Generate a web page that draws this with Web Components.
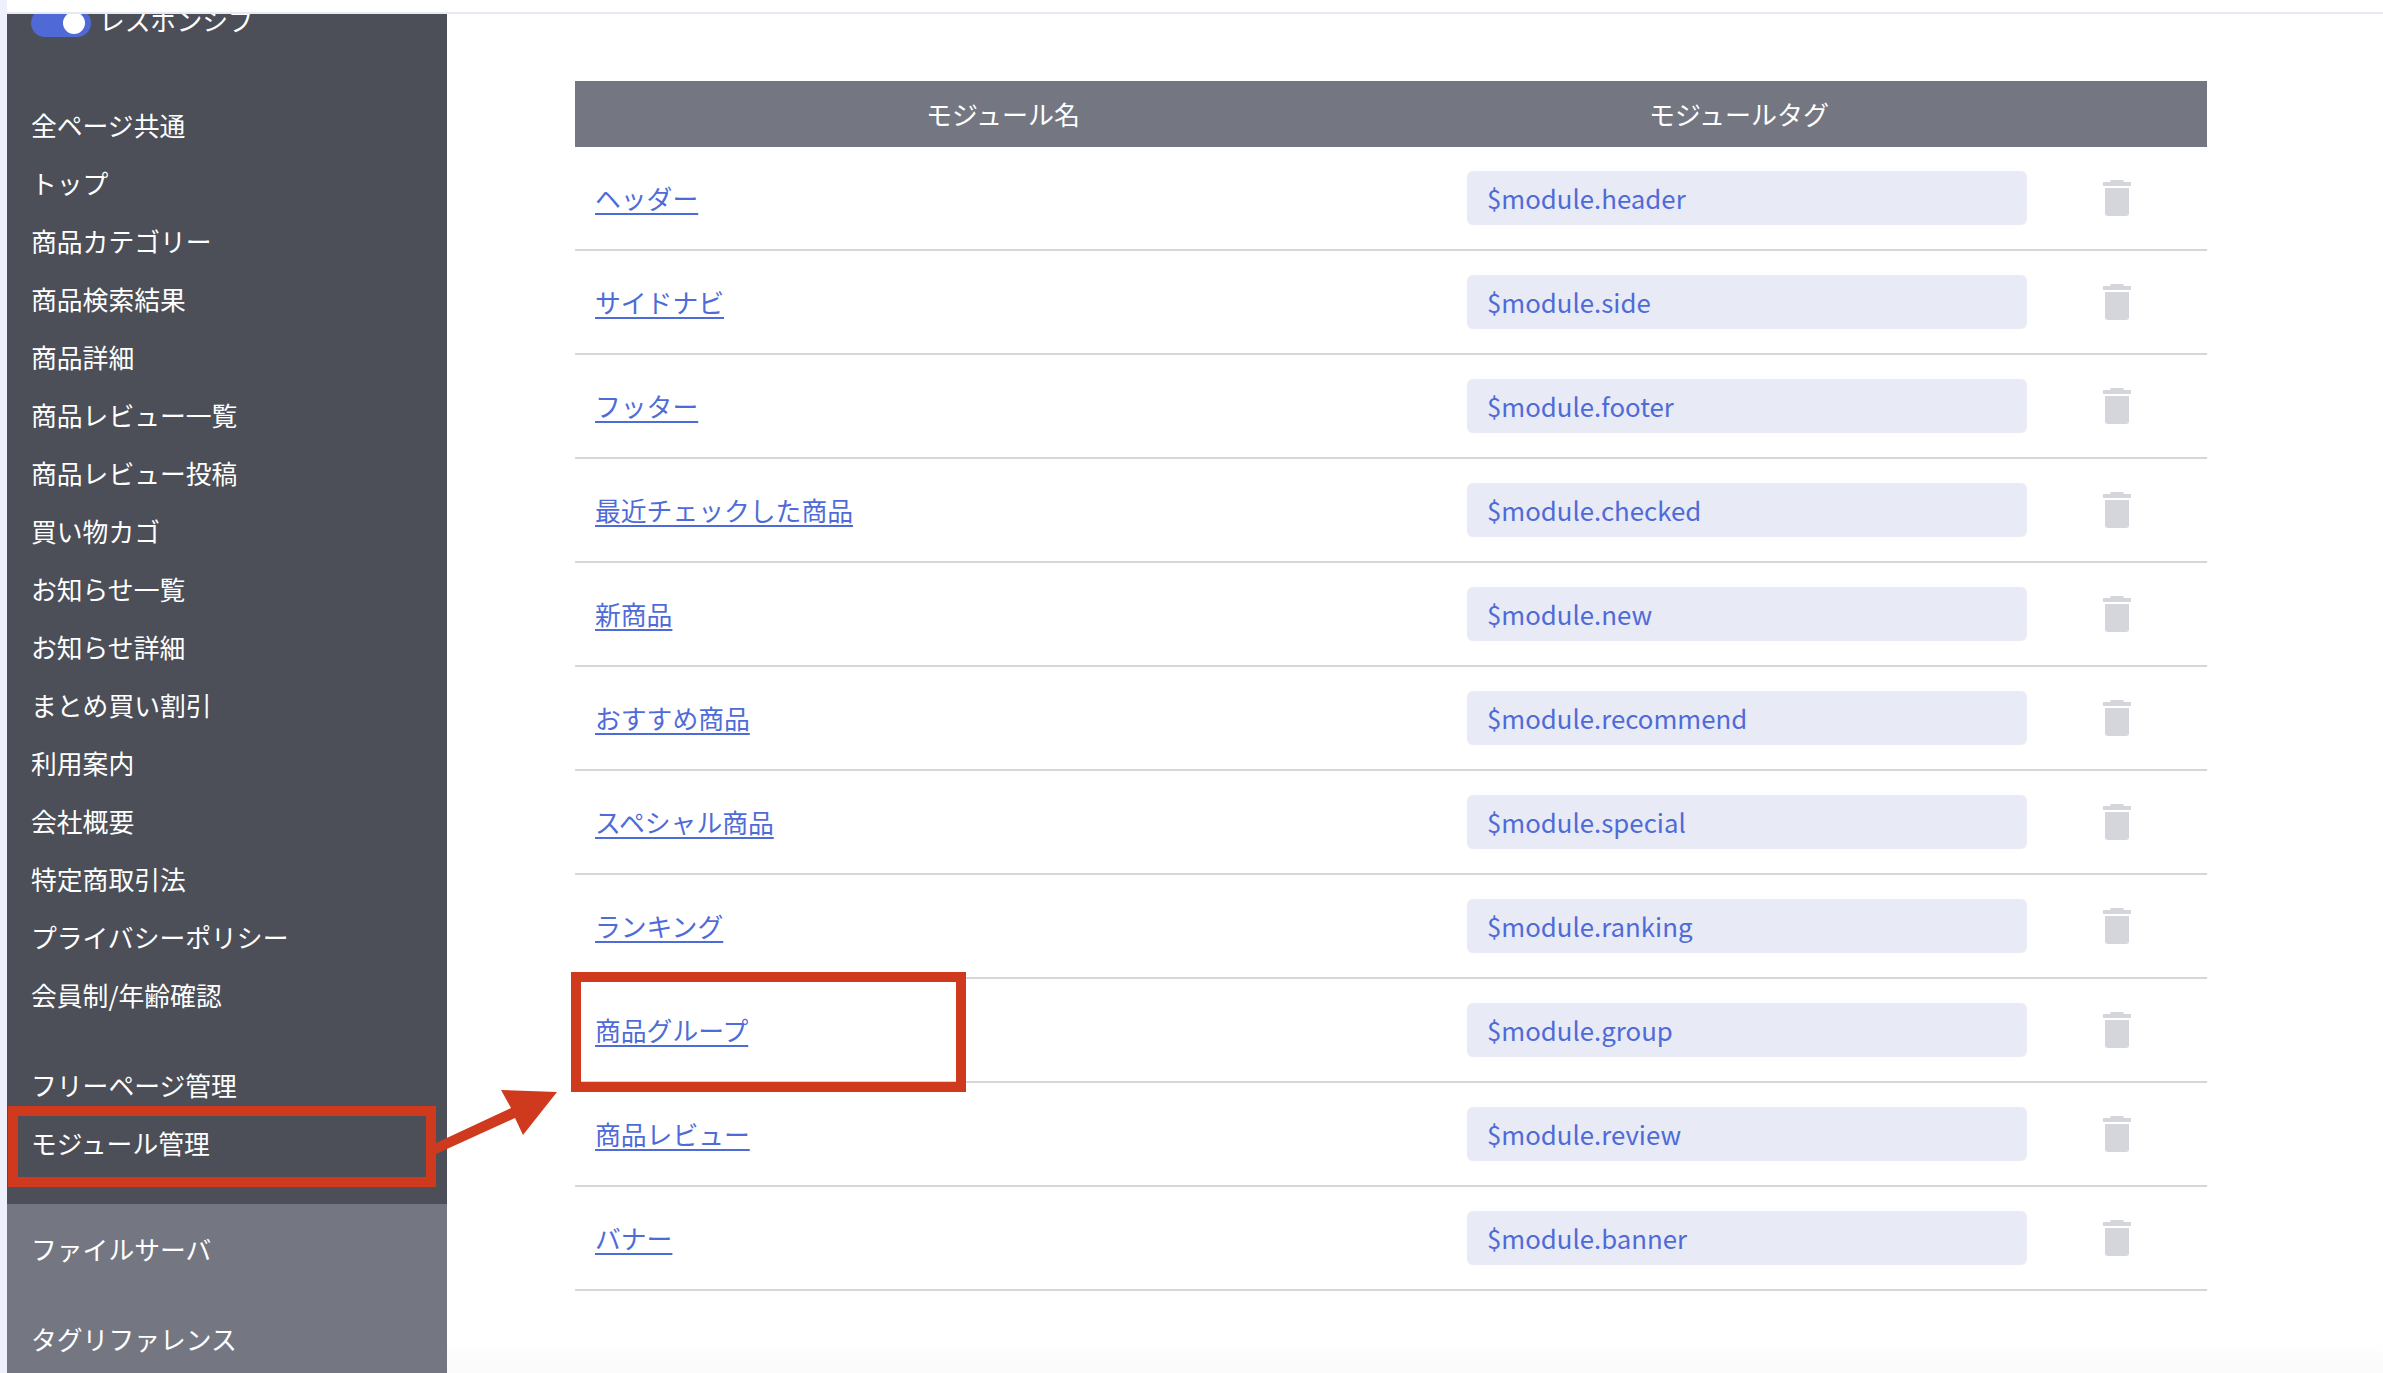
<!DOCTYPE html>
<html lang="ja">
<head>
<meta charset="utf-8">
<title>モジュール管理</title>
<style>
    html, body { margin: 0; height: 100%; overflow: hidden; background: #fff; }
    body { font-family: "Noto Sans CJK JP", "Noto Sans", sans-serif; }
</style>
</head>
<body>
<admin-page>
    <side-nav slot="side">
        <nav-toggle>レスポンシブ</nav-toggle>
        <nav-group>
            <nav-item>全ページ共通</nav-item>
            <nav-item>トップ</nav-item>
            <nav-item>商品カテゴリー</nav-item>
            <nav-item>商品検索結果</nav-item>
            <nav-item>商品詳細</nav-item>
            <nav-item>商品レビュー一覧</nav-item>
            <nav-item>商品レビュー投稿</nav-item>
            <nav-item>買い物カゴ</nav-item>
            <nav-item>お知らせ一覧</nav-item>
            <nav-item>お知らせ詳細</nav-item>
            <nav-item>まとめ買い割引</nav-item>
            <nav-item>利用案内</nav-item>
            <nav-item>会社概要</nav-item>
            <nav-item>特定商取引法</nav-item>
            <nav-item>プライバシーポリシー</nav-item>
            <nav-item>会員制/年齢確認</nav-item>
        </nav-group>
        <nav-group>
            <nav-item>フリーページ管理</nav-item>
            <nav-item>モジュール管理</nav-item>
        </nav-group>
        <nav-tools slot="tools">
            <nav-item>ファイルサーバ</nav-item>
            <nav-item>タグリファレンス</nav-item>
        </nav-tools>
    </side-nav>
    <module-table>
        <module-row tag="$module.header">ヘッダー</module-row>
        <module-row tag="$module.side">サイドナビ</module-row>
        <module-row tag="$module.footer">フッター</module-row>
        <module-row tag="$module.checked">最近チェックした商品</module-row>
        <module-row tag="$module.new">新商品</module-row>
        <module-row tag="$module.recommend">おすすめ商品</module-row>
        <module-row tag="$module.special">スペシャル商品</module-row>
        <module-row tag="$module.ranking">ランキング</module-row>
        <module-row tag="$module.group">商品グループ</module-row>
        <module-row tag="$module.review">商品レビュー</module-row>
        <module-row tag="$module.banner">バナー</module-row>
    </module-table>
    <call-out slot="overlay"></call-out>
</admin-page>

<script>
class AdminPage extends HTMLElement {
    constructor(){
        super();
        this.attachShadow({mode:'open'});
        this.shadowRoot.innerHTML = `
            <style>
                :host{
                    display: grid;
                    grid-template-columns: 7px 440px 1fr;
                    grid-template-rows: 14px 1fr;
                    position: relative;
                    height: 1373px;
                    overflow: hidden;
                    background: #fff;
                }
                .strip{
                    grid-row: 1 / 3;
                    background: #eef1fb;
                }
                .top{
                    grid-column: 2 / 4;
                    background: #fff;
                    border-bottom: 2px solid #e8eaf2;
                    box-sizing: border-box;
                }
                main{
                    padding: 67px 176px 0 128px;
                    background: linear-gradient(to bottom, #fff 1325px, #fafafa 1359px);
                }
            </style>
            <div class="strip"></div>
            <div class="top"></div>
            <slot name="side"></slot>
            <main><slot></slot></main>
            <slot name="overlay"></slot>
        `;
    }
}

class SideNav extends HTMLElement {
    constructor(){
        super();
        this.attachShadow({mode:'open'});
        this.shadowRoot.innerHTML = `
            <style>
                :host{
                    display: flex;
                    flex-direction: column;
                    height: 1359px;
                    overflow: hidden;
                    color: #fff;
                    font-size: 25.8px;
                }
                .dark{
                    display: flex;
                    flex-direction: column;
                    gap: 32px;
                    box-sizing: border-box;
                    height: 1190px;
                    padding-left: 24px;
                    background: #4c4f58;
                }
                .light{
                    flex: 1;
                    padding-left: 24px;
                    background: #747781;
                }
            </style>
            <div class="dark"><slot></slot></div>
            <div class="light"><slot name="tools"></slot></div>
        `;
    }
}

class NavToggle extends HTMLElement {
    constructor(){
        super();
        this.attachShadow({mode:'open'});
        this.shadowRoot.innerHTML = `
            <style>
                :host{
                    display: flex;
                    align-items: center;
                    gap: 8px;
                    height: 28px;
                    margin-top: -5px;
                    margin-bottom: 27px;
                    line-height: 28px;
                }
                .track{
                    position: relative;
                    width: 60px;
                    height: 28px;
                    border-radius: 14px;
                    background: #4f69d6;
                }
                .knob{
                    position: absolute;
                    top: 3px;
                    right: 6px;
                    width: 22px;
                    height: 22px;
                    border-radius: 50%;
                    background: #fff;
                }
                span{ position: relative; top: -3px; }
            </style>
            <div class="track"><div class="knob"></div></div>
            <span><slot></slot></span>
        `;
    }
}

class NavGroup extends HTMLElement {
    constructor(){
        super();
        this.attachShadow({mode:'open'});
        this.shadowRoot.innerHTML = `
            <style>
                :host{ display: block; }
            </style>
            <slot></slot>
        `;
    }
}

class NavTools extends HTMLElement {
    constructor(){
        super();
        this.attachShadow({mode:'open'});
        this.shadowRoot.innerHTML = `
            <style>
                :host{
                    display: flex;
                    flex-direction: column;
                    gap: 32px;
                    padding-top: 16px;
                }
            </style>
            <slot></slot>
        `;
    }
}

class NavItem extends HTMLElement {
    constructor(){
        super();
        this.attachShadow({mode:'open'});
        this.shadowRoot.innerHTML = `
            <style>
                :host{
                    display: block;
                    height: 58px;
                    line-height: 58px;
                    white-space: nowrap;
                }
            </style>
            <slot></slot>
        `;
    }
}

class ModuleTable extends HTMLElement {
    constructor(){
        super();
        this.attachShadow({mode:'open'});
        this.shadowRoot.innerHTML = `
            <style>
                :host{
                    display: block;
                    font-size: 25.8px;
                }
                .head{
                    display: grid;
                    grid-template-columns: 856px 616px 1fr;
                    height: 66px;
                    line-height: 66px;
                    font-size: 26px;
                    text-align: center;
                    color: #fff;
                    background: #747781;
                }
            </style>
            <div class="head">
                <div>モジュール名</div>
                <div>モジュールタグ</div>
                <div></div>
            </div>
            <slot></slot>
        `;
    }
}

class ModuleRow extends HTMLElement {
    constructor(){
        super();
        this.attachShadow({mode:'open'});
        this.shadowRoot.innerHTML = `
            <style>
                :host{
                    display: grid;
                    grid-template-columns: 892px 560px 1fr;
                    align-items: center;
                    height: 104px;
                    box-sizing: border-box;
                    border-bottom: 2px solid #d5d6dc;
                }
                a{
                    margin-left: 20px;
                    justify-self: start;
                    position: relative;
                    top: -1px;
                    color: #4f6bd8;
                    text-decoration-thickness: 2px;
                    text-underline-offset: 4px;
                }
                .tag{
                    box-sizing: border-box;
                    height: 54px;
                    line-height: 53px;
                    padding-left: 20px;
                    border-radius: 6px;
                    color: #4f6bd8;
                    background: #e8eaf6;
                }
                svg{
                    display: block;
                    margin-left: 76px;
                }
            </style>
            <a href="#"><slot></slot></a>
            <div class="tag">${this.getAttribute('tag') || ''}</div>
            <svg width="28" height="36" viewBox="0 0 28 36" fill="#d5d6dc">
                <path d="M0 2h7l1-2h12l1 2h7v4H0z"/>
                <path d="M2 8h24v25a3 3 0 0 1-3 3H5a3 3 0 0 1-3-3z"/>
            </svg>
        `;
    }
}

class CallOut extends HTMLElement {
    constructor(){
        super();
        this.attachShadow({mode:'open'});
        this.shadowRoot.innerHTML = `
            <style>
                :host{
                    position: absolute;
                    inset: 0;
                    pointer-events: none;
                }
                .box{
                    position: absolute;
                    box-sizing: border-box;
                    border: 10px solid #cf3a1f;
                }
                .nav{ left: 8px; top: 1106px; width: 428px; height: 81px; }
                .link{ left: 571px; top: 972px; width: 395px; height: 120px; }
                svg{ position: absolute; left: 0; top: 0; }
            </style>
            <div class="box nav"></div>
            <div class="box link"></div>
            <svg width="2383" height="1373" viewBox="0 0 2383 1373" fill="#cf3a1f">
                <path d="M436 1143L511 1108L501 1090L557 1092L523 1135L515 1118L436 1154z"/>
            </svg>
        `;
    }
}

customElements.define('admin-page', AdminPage);
customElements.define('side-nav', SideNav);
customElements.define('nav-toggle', NavToggle);
customElements.define('nav-group', NavGroup);
customElements.define('nav-item', NavItem);
customElements.define('nav-tools', NavTools);
customElements.define('module-table', ModuleTable);
customElements.define('module-row', ModuleRow);
customElements.define('call-out', CallOut);
</script>
</body>
</html>
